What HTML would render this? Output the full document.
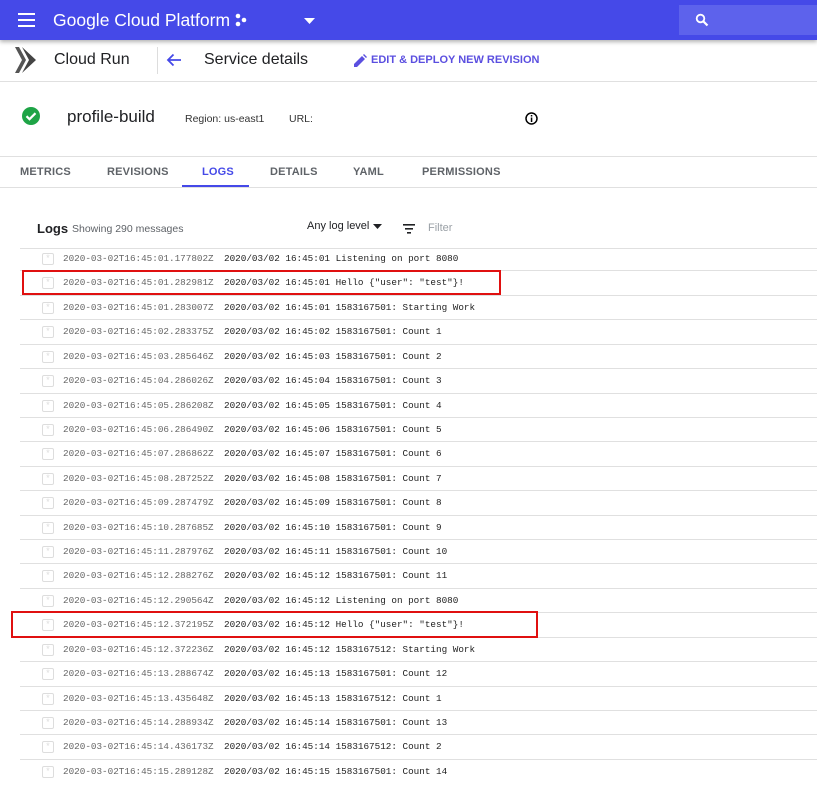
<!DOCTYPE html>
<html><head><meta charset="utf-8"><style>
*{margin:0;padding:0;box-sizing:border-box}
body{width:817px;height:800px;overflow:hidden;background:#fff;font-family:"Liberation Sans",Arial,sans-serif;position:relative;color:#202124}
.abs{position:absolute}
.hdr{left:0;top:0;width:817px;height:40px;background:#4549e8;box-shadow:0 2px 4px rgba(0,0,0,.3);z-index:2}
.tabs span{position:absolute;top:166px;font-size:11px;font-weight:bold;color:#5f6368;letter-spacing:.2px}
.rows{left:20px;top:247px;width:797px}
.row{height:24.43px;border-bottom:1px solid #e0e0e0;position:relative;font-family:"Liberation Mono",monospace;font-size:9.3px;line-height:24px;white-space:pre}
.row:last-child{border-bottom:none}
.cb{position:absolute;left:22px;top:6px;width:12px;height:12px;border:1px solid #ddd;border-radius:2px;color:#ddd;font-size:9px;line-height:10px;text-align:center}
.ts{position:absolute;left:43px;color:#666}
.msg{position:absolute;left:204px;color:#222}
.red{border:2px solid #e01010;position:absolute;z-index:5}
</style></head><body>
<div class="abs hdr">
 <svg class="abs" style="left:18px;top:13px" width="18" height="14"><rect y="0" width="17" height="2" fill="#fff"/><rect y="6" width="17" height="2" fill="#fff"/><rect y="12" width="17" height="2" fill="#fff"/></svg>
 <div class="abs" style="left:53px;top:10px;font-size:17.5px;color:#fff">Google Cloud Platform</div>
 <svg class="abs" style="left:234px;top:13px" width="14" height="14"><circle cx="4" cy="3" r="2.3" fill="#fff"/><circle cx="10" cy="7" r="2.3" fill="#fff"/><circle cx="4" cy="11" r="2.3" fill="#fff"/></svg>
 <svg class="abs" style="left:304px;top:18px" width="12" height="6"><path d="M0 0h11L5.5 6z" fill="#fff"/></svg>
 <div class="abs" style="left:679px;top:5px;width:138px;height:30px;background:#5d62ec"></div>
 <svg class="abs" style="left:695px;top:13px" width="14" height="14"><circle cx="5.5" cy="5.5" r="3.8" stroke="#fff" stroke-width="1.8" fill="none"/><path d="M8 8l4.5 4.5" stroke="#fff" stroke-width="2.2"/></svg>
</div>
<svg class="abs" style="left:14px;top:46px" width="28" height="28"><path d="M1 1l7 13-7 13h4l7-13-7-13z" fill="#555"/><path d="M8 1l14 13-14 13 7-13z" fill="#444"/></svg>
<div class="abs" style="left:54px;top:51px;font-size:16px;color:#202124">Cloud Run</div>
<div class="abs" style="left:157px;top:47px;width:1px;height:27px;background:#ddd"></div>
<svg class="abs" style="left:166px;top:53px" width="16" height="14"><path d="M15 7H2M7.5 1.5L2 7l5.5 5.5" stroke="#4549e8" stroke-width="1.8" fill="none"/></svg>
<div class="abs" style="left:204px;top:51px;font-size:16px;color:#202124">Service details</div>
<svg class="abs" style="left:354px;top:54px" width="13" height="13"><path d="M0 10v3h3l8-8-3-3zM9 1l3 3 1-1-3-3z" fill="#5b4fe0"/></svg>
<div class="abs" style="left:371px;top:54px;font-size:11px;font-weight:bold;color:#5b4fe0">EDIT &amp; DEPLOY NEW REVISION</div>
<div class="abs" style="left:0;top:81px;width:817px;height:1px;background:#e0e0e0"></div>
<svg class="abs" style="left:22px;top:107px" width="18" height="18"><circle cx="9" cy="9" r="9" fill="#1ea446"/><path d="M4.5 9.2l3 3 6-6" stroke="#fff" stroke-width="2.2" fill="none"/></svg>
<div class="abs" style="left:67px;top:107px;font-size:17px">profile-build</div>
<div class="abs" style="left:185px;top:113px;font-size:10.5px;color:#333">Region: us-east1</div>
<div class="abs" style="left:289px;top:113px;font-size:10.5px;color:#333">URL:</div>
<svg class="abs" style="left:525px;top:112px" width="13" height="13"><circle cx="6.5" cy="6.5" r="5.5" stroke="#000" stroke-width="1.5" fill="none"/><rect x="5.8" y="5.5" width="1.5" height="4.5"/><rect x="5.8" y="3" width="1.5" height="1.5"/></svg>
<div class="abs" style="left:0;top:156px;width:817px;height:1px;background:#e0e0e0"></div>
<div class="tabs"><span style="left:20px">METRICS</span><span style="left:107px">REVISIONS</span><span style="left:202px;color:#4549e8">LOGS</span><span style="left:270px">DETAILS</span><span style="left:353px">YAML</span><span style="left:422px">PERMISSIONS</span></div>
<div class="abs" style="left:182px;top:185px;width:67px;height:2px;background:#4549e8"></div>
<div class="abs" style="left:0;top:187px;width:817px;height:1px;background:#e0e0e0"></div>
<div class="abs" style="left:37px;top:221px;font-size:13px;font-weight:bold;color:#202124">Logs</div>
<div class="abs" style="left:72px;top:223px;font-size:10.5px;color:#5f6368">Showing 290 messages</div>
<div class="abs" style="left:307px;top:220px;font-size:11px;color:#202124">Any log level</div>
<svg class="abs" style="left:373px;top:224px" width="9" height="5"><path d="M0 0h9L4.5 5z" fill="#202124"/></svg>
<svg class="abs" style="left:403px;top:224px" width="12" height="10"><rect width="12" height="1.6" fill="#202124"/><rect x="2" y="4" width="8" height="1.6" fill="#202124"/><rect x="4" y="8" width="4" height="1.6" fill="#202124"/></svg>
<div class="abs" style="left:428px;top:222px;font-size:11px;color:#9aa0a6">Filter</div>
<div class="abs" style="left:20px;top:248px;width:797px;height:1px;background:#e0e0e0"></div>
<div class="abs rows">
<div class="row"><span class="cb">*</span><span class="ts">2020-03-02T16:45:01.177802Z</span><span class="msg">2020/03/02 16:45:01 Listening on port 8080</span></div>
<div class="row"><span class="cb">*</span><span class="ts">2020-03-02T16:45:01.282981Z</span><span class="msg">2020/03/02 16:45:01 Hello {"user": "test"}!</span></div>
<div class="row"><span class="cb">*</span><span class="ts">2020-03-02T16:45:01.283007Z</span><span class="msg">2020/03/02 16:45:01 1583167501: Starting Work</span></div>
<div class="row"><span class="cb">*</span><span class="ts">2020-03-02T16:45:02.283375Z</span><span class="msg">2020/03/02 16:45:02 1583167501: Count 1</span></div>
<div class="row"><span class="cb">*</span><span class="ts">2020-03-02T16:45:03.285646Z</span><span class="msg">2020/03/02 16:45:03 1583167501: Count 2</span></div>
<div class="row"><span class="cb">*</span><span class="ts">2020-03-02T16:45:04.286026Z</span><span class="msg">2020/03/02 16:45:04 1583167501: Count 3</span></div>
<div class="row"><span class="cb">*</span><span class="ts">2020-03-02T16:45:05.286208Z</span><span class="msg">2020/03/02 16:45:05 1583167501: Count 4</span></div>
<div class="row"><span class="cb">*</span><span class="ts">2020-03-02T16:45:06.286490Z</span><span class="msg">2020/03/02 16:45:06 1583167501: Count 5</span></div>
<div class="row"><span class="cb">*</span><span class="ts">2020-03-02T16:45:07.286862Z</span><span class="msg">2020/03/02 16:45:07 1583167501: Count 6</span></div>
<div class="row"><span class="cb">*</span><span class="ts">2020-03-02T16:45:08.287252Z</span><span class="msg">2020/03/02 16:45:08 1583167501: Count 7</span></div>
<div class="row"><span class="cb">*</span><span class="ts">2020-03-02T16:45:09.287479Z</span><span class="msg">2020/03/02 16:45:09 1583167501: Count 8</span></div>
<div class="row"><span class="cb">*</span><span class="ts">2020-03-02T16:45:10.287685Z</span><span class="msg">2020/03/02 16:45:10 1583167501: Count 9</span></div>
<div class="row"><span class="cb">*</span><span class="ts">2020-03-02T16:45:11.287976Z</span><span class="msg">2020/03/02 16:45:11 1583167501: Count 10</span></div>
<div class="row"><span class="cb">*</span><span class="ts">2020-03-02T16:45:12.288276Z</span><span class="msg">2020/03/02 16:45:12 1583167501: Count 11</span></div>
<div class="row"><span class="cb">*</span><span class="ts">2020-03-02T16:45:12.290564Z</span><span class="msg">2020/03/02 16:45:12 Listening on port 8080</span></div>
<div class="row"><span class="cb">*</span><span class="ts">2020-03-02T16:45:12.372195Z</span><span class="msg">2020/03/02 16:45:12 Hello {"user": "test"}!</span></div>
<div class="row"><span class="cb">*</span><span class="ts">2020-03-02T16:45:12.372236Z</span><span class="msg">2020/03/02 16:45:12 1583167512: Starting Work</span></div>
<div class="row"><span class="cb">*</span><span class="ts">2020-03-02T16:45:13.288674Z</span><span class="msg">2020/03/02 16:45:13 1583167501: Count 12</span></div>
<div class="row"><span class="cb">*</span><span class="ts">2020-03-02T16:45:13.435648Z</span><span class="msg">2020/03/02 16:45:13 1583167512: Count 1</span></div>
<div class="row"><span class="cb">*</span><span class="ts">2020-03-02T16:45:14.288934Z</span><span class="msg">2020/03/02 16:45:14 1583167501: Count 13</span></div>
<div class="row"><span class="cb">*</span><span class="ts">2020-03-02T16:45:14.436173Z</span><span class="msg">2020/03/02 16:45:14 1583167512: Count 2</span></div>
<div class="row"><span class="cb">*</span><span class="ts">2020-03-02T16:45:15.289128Z</span><span class="msg">2020/03/02 16:45:15 1583167501: Count 14</span></div>
</div>
<div class="red" style="left:22px;top:270px;width:479px;height:25px"></div>
<div class="red" style="left:11px;top:611px;width:527px;height:27px"></div>
</body></html>
